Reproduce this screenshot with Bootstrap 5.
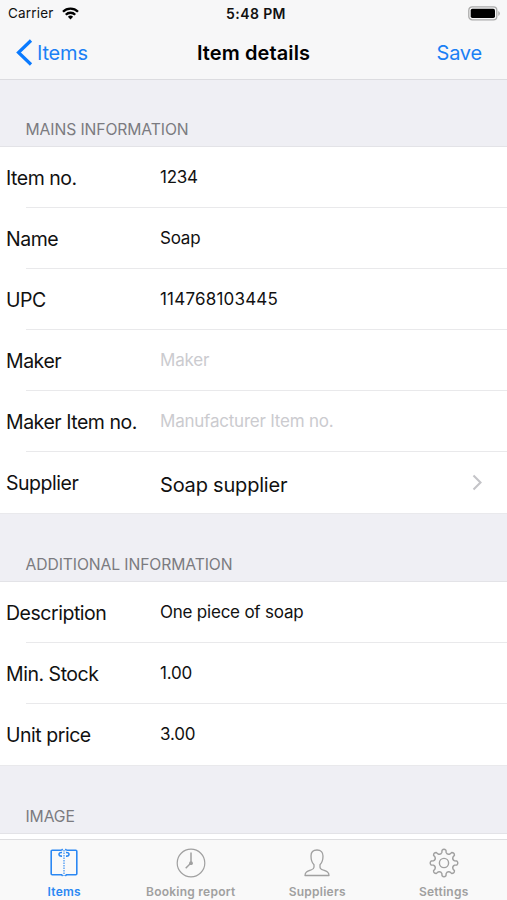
<!DOCTYPE html>
<html lang="en">
<head>
<meta charset="utf-8">
<meta name="viewport" content="width=device-width, initial-scale=1">
<title>Item details</title>
<link href="https://cdn.jsdelivr.net/npm/bootstrap@5.3.0/dist/css/bootstrap.min.css" rel="stylesheet">
<style>
body{font-family:Inter,"Liberation Sans",sans-serif;height:900px;background:#efeff4;color:#111}
.app-head{height:80px;background:#f7f7f8;border-bottom:1px solid #dcdce0}
.status{height:27px;font-size:13.5px;padding:0 7px 1px 8px}
.status>*{flex:1 1 0}
.status .time{font-weight:600;font-size:14px;letter-spacing:.4px}
.carrier{letter-spacing:.2px}
.titlebar{height:52px;font-size:20px;padding:0 25px 1px 16px}
.titlebar>*{flex:1 1 0}
.titlebar a{color:#1a80f5;letter-spacing:-.2px}
.titlebar h1{font-size:20px;font-weight:600;letter-spacing:.1px;color:#000;padding-left:9px}
.group-title{font-size:15.7px;color:#7b7b80;height:67px;padding:0 0 6px 25.5px;letter-spacing:-.1px;line-height:22px;font-weight:400}
.t2{height:69px}.t3{height:69px}
.cells{background:#fff;box-shadow:0 -1px #e3e3e7,0 1px #e9e9ec}
.cell-row{height:61px;padding:0 24px 0 6px;background:linear-gradient(#e9e9eb,#e9e9eb) 26px 100%/100% 1px no-repeat}
.cell-row:last-child{background:none}
.lbl{width:154px;font-size:19.5px;letter-spacing:-.47px;padding-top:2px}
.val{font-size:17px;letter-spacing:-.22px}
.digits{letter-spacing:.2px}
.empty{color:#cbcbcf}
.big{font-size:20px;letter-spacing:-.2px;padding-top:4px}
.tabs{height:61px;background:#f9f9f9;border-top:1px solid #dedee0;font-size:12px;font-weight:600;color:#a0a0a0;line-height:15px;letter-spacing:.25px}
.tabs a{color:inherit;padding-top:8px;flex:1 1 0}
.tabs a.on{color:#2b88f3;padding-left:1px}
.tabs svg{display:block;margin-bottom:6px}
</style>
<script src="https://cdn.jsdelivr.net/npm/bootstrap@5.3.0/dist/js/bootstrap.bundle.min.js"></script>
</head>
<body class="d-flex flex-column overflow-hidden">
<header class="app-head flex-shrink-0">
  <div class="status d-flex align-items-center">
    <div class="d-flex align-items-center"><span class="carrier">Carrier</span>
      <svg class="ms-2" width="17" height="13" viewBox="0 0 17 13" fill="none" stroke="#000" stroke-width="2.3"><path d="M1 4.7a10.6 10.6 0 0 1 15 0M3.8 7.7a6.6 6.6 0 0 1 9.4 0"/><path d="M8.5 12.5 5.9 9.8a3.7 3.7 0 0 1 5.2 0z" fill="#000" stroke="none"/></svg>
    </div>
    <div class="time text-center text-nowrap ps-1">5:48 PM</div>
    <div class="d-flex justify-content-end">
      <svg width="32" height="15" viewBox="0 0 32 15"><rect x=".8" y=".8" width="28" height="13" rx="3.4" fill="#f7f7f8" stroke="#aaa" stroke-width="1.3"/><rect x="2.7" y="2.7" width="24.3" height="9.3" rx="1.7"/><path d="M30.3 5v5q1.5-.8 1.5-2.5T30.3 5" fill="#aaa"/></svg>
    </div>
  </div>
  <nav class="titlebar d-flex align-items-center">
    <a class="d-flex align-items-center text-decoration-none" href="#"><svg class="me-1" width="17" height="27" viewBox="0 0 17 27" fill="none" stroke="#0a7aff" stroke-width="3.2"><path d="M15 1.5 2.5 13.5l12.5 12"/></svg><span>Items</span></a>
    <h1 class="m-0 text-center text-nowrap">Item details</h1>
    <a class="text-end text-decoration-none" href="#">Save</a>
  </nav>
</header>
<main class="flex-grow-1 overflow-hidden">
  <h2 class="group-title m-0 d-flex align-items-end">MAINS INFORMATION</h2>
  <div class="cells">
    <div class="cell-row d-flex align-items-center"><span class="lbl">Item no.</span><span class="val">1234</span></div>
    <div class="cell-row d-flex align-items-center"><span class="lbl">Name</span><span class="val">Soap</span></div>
    <div class="cell-row d-flex align-items-center"><span class="lbl">UPC</span><span class="val digits">114768103445</span></div>
    <div class="cell-row d-flex align-items-center"><span class="lbl">Maker</span><span class="val empty">Maker</span></div>
    <div class="cell-row d-flex align-items-center"><span class="lbl">Maker Item no.</span><span class="val empty">Manufacturer Item no.</span></div>
    <div class="cell-row d-flex align-items-center"><span class="lbl">Supplier</span><span class="val big">Soap supplier</span>
      <svg class="ms-auto" width="11" height="17" viewBox="0 0 11 17" fill="none" stroke="#c4c4c8" stroke-width="2.1"><path d="m1.5 1.5 7 7-7 7"/></svg></div>
  </div>
  <h2 class="group-title t2 m-0 d-flex align-items-end">ADDITIONAL INFORMATION</h2>
  <div class="cells">
    <div class="cell-row d-flex align-items-center"><span class="lbl">Description</span><span class="val">One piece of soap</span></div>
    <div class="cell-row d-flex align-items-center"><span class="lbl">Min. Stock</span><span class="val">1.00</span></div>
    <div class="cell-row d-flex align-items-center"><span class="lbl">Unit price</span><span class="val">3.00</span></div>
  </div>
  <h2 class="group-title t3 m-0 d-flex align-items-end">IMAGE</h2>
  <div class="cells pt-3"></div>
</main>
<nav class="tabs d-flex flex-shrink-0">
  <a class="on d-flex flex-column align-items-center text-decoration-none" href="#">
    <svg width="28" height="30" viewBox="0 0 28 30" fill="none" stroke="currentColor" stroke-width="1.6"><path d="M11.5 2.3H2.2a1 1 0 0 0-1 1v22.4a1 1 0 0 0 1 1h9.3l1.2 1.2M16.5 2.3h9.3a1 1 0 0 1 1 1v22.4a1 1 0 0 1-1 1h-9.3l-1.2 1.2M11.5 2.3l1.2-1.2M16.5 2.3l-1.2-1.2"/><path d="M14 2v26" stroke-width="1.1" stroke-dasharray="1.5 1"/><path d="M12 4.5q-3-.2-3 1.8t3 1.8M16 4.5q3-.2 3 1.8t-3 1.8"/></svg>
    <span>Items</span></a>
  <a class="d-flex flex-column align-items-center text-decoration-none" href="#">
    <svg width="30" height="30" viewBox="0 0 30 30" fill="none" stroke="currentColor" stroke-width="1.2"><circle cx="15" cy="15" r="13.8"/><path d="M15 4.5V15l-5.3 5.3" stroke-width="1.5"/><circle cx="15" cy="15.2" r="1.3" fill="currentColor"/></svg>
    <span class="text-nowrap">Booking report</span></a>
  <a class="d-flex flex-column align-items-center text-decoration-none" href="#">
    <svg width="26" height="30" viewBox="0 0 26 30" fill="none" stroke="currentColor" stroke-width="1.3" stroke-linejoin="round"><path d="M13 2C9 2 7 4.3 7 8c0 4 .7 6.5 3 8.8v2.4c0 1.5-1 2-3 2.8-3.5 1.3-6 2-6 5.5h24c0-3.5-2.5-4.2-6-5.5-2-.8-3-1.3-3-2.8v-2.4c2.3-2.3 3-4.8 3-8.8 0-3.700-2-6-6-6z"/></svg>
    <span>Suppliers</span></a>
  <a class="d-flex flex-column align-items-center text-decoration-none" href="#">
    <svg width="30" height="30" viewBox="-15 -15 30 30" fill="none" stroke="currentColor" stroke-width="1.4" stroke-linejoin="round"><path id="gear"/><circle r="4.6"/></svg>
    <span>Settings</span></a>
</nav>
<script>
// Eight-toothed gear outline: two rim points and two rounded tip points per tooth.
const pt=(r,a)=>(r*Math.cos(a)).toFixed(2)+' '+(r*Math.sin(a)).toFixed(2);
let d='';
for(let i=0;i<8;i++){
  const a=i*Math.PI/4;
  d+=(i?'Q'+pt(8.6,a-Math.PI/8)+' ':'M')+pt(10.8,a-.2)+'L'+pt(13,a-.15)+'Q'+pt(14.8,a)+' '+pt(13,a+.15)+'L'+pt(10.8,a+.2);
}
d+='Q'+pt(8.6,-Math.PI/8)+' '+pt(10.8,-.2)+'Z';
document.getElementById('gear').setAttribute('d',d);
</script>
</body>
</html>
